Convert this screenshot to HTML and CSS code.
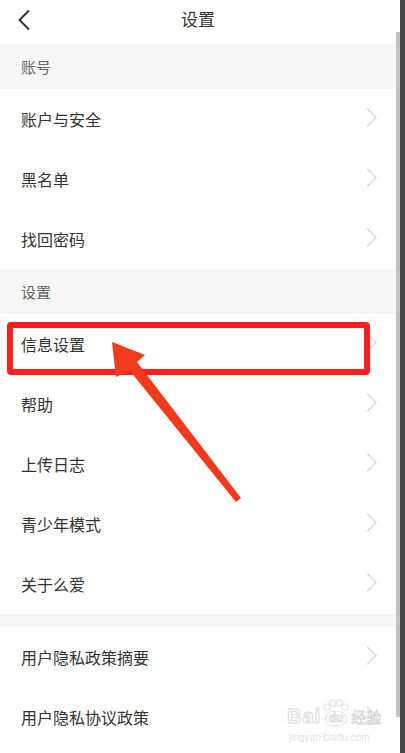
FILE: index.html
```html
<!DOCTYPE html>
<html lang="zh-CN">
<head>
  <meta charset="UTF-8" />
  <title>设置</title>
  <meta name="viewport" content="width=device-width, initial-scale=1.0" />
  <link rel="stylesheet" href="styles.css">
</head>
<body>
  <div class="screen">
    <div class="page">
      <div class="topbar">
        <svg class="back" width="14" height="22" viewBox="0 0 14 22">
          <path d="M12 1.5 L2.5 11 L12 20.5" fill="none" stroke="#333" stroke-width="2"/>
        </svg>
        <div class="topbar-title">设置</div>
      </div>

      <div class="group-title">账号</div>
      <div class="row"><span>账户与安全</span><i class="chev"></i></div>
      <div class="row"><span>黑名单</span><i class="chev"></i></div>
      <div class="row"><span>找回密码</span><i class="chev"></i></div>

      <div class="group-title">设置</div>
      <div class="row"><span>信息设置</span><i class="chev"></i></div>
      <div class="row"><span>帮助</span><i class="chev"></i></div>
      <div class="row"><span>上传日志</span><i class="chev"></i></div>
      <div class="row"><span>青少年模式</span><i class="chev"></i></div>
      <div class="row"><span>关于么爱</span><i class="chev"></i></div>

      <div class="spacer"></div>
      <div class="row"><span>用户隐私政策摘要</span><i class="chev"></i></div>
      <div class="row"><span>用户隐私协议政策</span><i class="chev"></i></div>

      <!-- annotation overlays -->
      <div class="mark-box"></div>
      <svg class="mark-arrow" width="405" height="753" viewBox="0 0 405 753">
        <polygon points="112,342 145,355 137,362 241,498 236,502 130,371 116,377" fill="#f23b1d"/>
      </svg>
      <div class="thumb"></div>
      <div class="watermark">
        <div class="wm-logo">
          <span class="wm-bai">Bai</span>
          <span class="wm-paw">
            <svg width="26" height="12" viewBox="0 0 26 12">
              <circle cx="4" cy="8" r="3" fill="none" stroke="#e2e2e2" stroke-width="1.2"/>
              <circle cx="9.5" cy="4" r="3.2" fill="none" stroke="#e2e2e2" stroke-width="1.2"/>
              <circle cx="16.5" cy="4" r="3.2" fill="none" stroke="#e2e2e2" stroke-width="1.2"/>
              <circle cx="22" cy="8" r="3" fill="none" stroke="#e2e2e2" stroke-width="1.2"/>
            </svg>
            <span class="wm-du">du</span>
          </span>
          <span class="wm-cn">经验</span>
        </div>
        <div class="wm-url">jingyan.baidu.com</div>
      </div>
    </div>
    <div class="edge"></div>
  </div>
</body>
</html>
```

FILE: styles.css
```css
* {
  box-sizing: border-box;
}

body {
  margin: 0;
  background: #fff;
  font-family: "Noto Sans CJK SC", "Noto Sans", sans-serif;
  color: #333;
}

.screen {
  display: flex;
  width: 405px;
  height: 753px;
  overflow: hidden;
}

.page {
  position: relative;
  width: 400px;
  height: 753px;
  background: #fff;
  padding-right: 4px;
}

.edge {
  width: 5px;
  background: #454545;
}

.topbar {
  position: relative;
  height: 44px;
  display: flex;
  align-items: center;
  justify-content: center;
  padding-bottom: 7px;
}

.back {
  position: absolute;
  left: 17px;
  top: 9px;
}

.topbar-title {
  font-size: 17px;
  color: #333;
}

.group-title {
  height: 45px;
  background: #f6f6f6;
  display: flex;
  align-items: center;
  padding-left: 21px;
  font-size: 15px;
  color: #666;
}

.row {
  height: 60px;
  display: flex;
  align-items: center;
  justify-content: space-between;
  padding: 0 22px 0 21px;
  font-size: 16px;
  color: #333;
}

.chev {
  width: 13px;
  height: 13px;
  border-top: 1px solid #cdcdcd;
  border-right: 1px solid #cdcdcd;
  transform: rotate(45deg);
  margin-top: -4px;
}

.spacer {
  height: 13px;
  background: #f6f6f6;
}

.mark-box {
  position: absolute;
  left: 7px;
  top: 322px;
  width: 363px;
  height: 53px;
  border: 6px solid #ff1e1e;
  border-radius: 4px;
}

.mark-arrow {
  position: absolute;
  left: 0;
  top: 0;
}

.thumb {
  position: absolute;
  right: 0;
  top: 32px;
  width: 4px;
  height: 685px;
  background: #c2c2c2;
}

.watermark {
  position: absolute;
  left: 287px;
  top: 698px;
  white-space: nowrap;
  font-family: "Liberation Sans", sans-serif;
}

.wm-logo {
  display: flex;
  align-items: flex-end;
  height: 28px;
}

.wm-bai {
  font-size: 20px;
  font-weight: bold;
  line-height: 20px;
  color: #fff;
  -webkit-text-stroke: 1px #dcdcdc;
  letter-spacing: 1px;
}

.wm-paw {
  display: flex;
  flex-direction: column;
  align-items: center;
  margin: 0 2px;
}

.wm-du {
  font-size: 12px;
  font-weight: bold;
  line-height: 13px;
  color: #fff;
  -webkit-text-stroke: 1px #dcdcdc;
  border: 1.5px solid #e2e2e2;
  border-radius: 8px 8px 7px 7px;
  padding: 0 3px;
}

.wm-cn {
  font-family: "Noto Sans CJK SC", sans-serif;
  font-size: 15px;
  line-height: 18px;
  color: #fff;
  -webkit-text-stroke: 0.8px #d6d6d6;
}

.wm-url {
  font-size: 10px;
  line-height: 12px;
  margin-top: 6px;
  padding-left: 2px;
  color: #e4e4e4;
}
```
